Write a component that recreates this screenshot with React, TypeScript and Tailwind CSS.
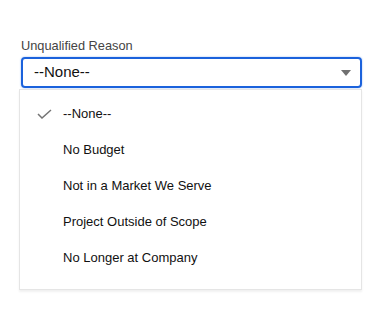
const options = [
  'No Budget',
  'Not in a Market We Serve',
  'Project Outside of Scope',
  'No Longer at Company',
];

export default function App() {
  return (
    <div className="w-[378px] h-[336px] bg-white pt-[38px] pl-[19px] pr-[16px] font-['Liberation_Sans',sans-serif]">
      <label className="block pl-[2px] text-[12.8px] leading-[16px] text-[#444444] mb-[3px]">Unqualified Reason</label>

      {/* Select */}
      <div className="ml-[2px] h-[31px] flex items-center justify-between rounded-[4px] border-2 border-[#1b62dc] shadow-[0_0_2px_#93b8f0] pl-[11px] pr-[9px]">
        <span className="text-[15px] text-[#111111]">--None--</span>
        <svg width="10" height="6" viewBox="0 0 10 6" className="mt-[1px]">
          <path d="M0 0h10L5 6z" fill="#707070" />
        </svg>
      </div>

      {/* Dropdown */}
      <div className="mt-[1px] h-[201px] border border-[#e5e5e5] shadow-[0_2px_2px_rgba(0,0,0,0.06)] pt-[6px] bg-white">
        <div className="h-[36px] flex items-center">
          <svg width="15" height="10" viewBox="0 0 15 10" className="ml-[17px] mr-[11px]">
            <path d="M1 5l4 4 9-8" fill="none" stroke="#747474" strokeWidth="1.5" />
          </svg>
          <span className="text-[13px] text-[#111111]">--None--</span>
        </div>
        {options.map(o => (
          <div key={o} className="h-[36px] flex items-center pl-[43px] text-[13px] text-[#111111]">
            {o}
          </div>
        ))}
      </div>
    </div>
  );
}
